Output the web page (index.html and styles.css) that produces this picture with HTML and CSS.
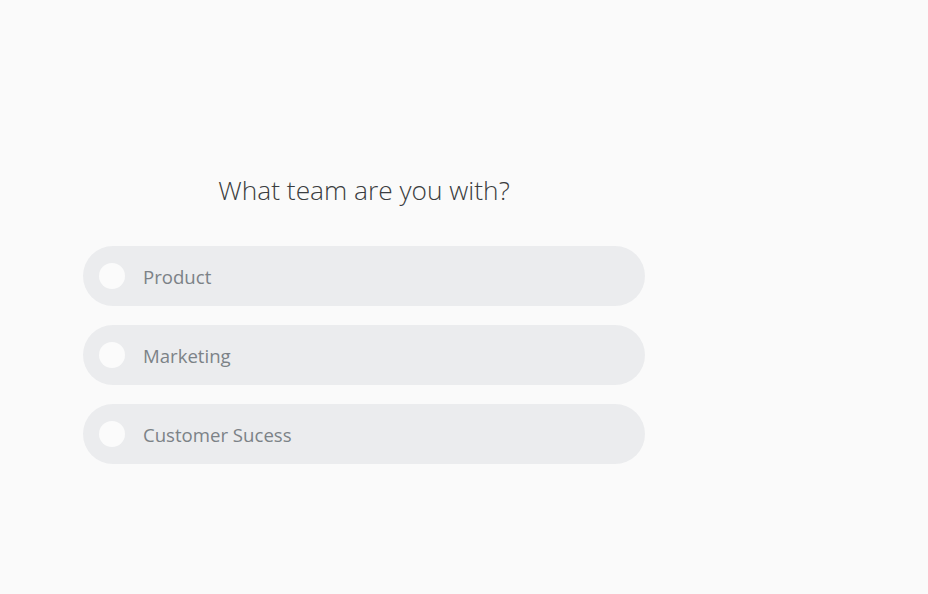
FILE: index.html
```html
<!DOCTYPE html>
<html>
<head>
<meta charset="utf-8">
<link rel="stylesheet" href="styles.css">
</head>
<body>
<div class="survey">
  <h1 class="question">What team are you with?</h1>
  <div class="options">
    <label class="option"><span class="radio"></span><span class="label">Product</span></label>
    <label class="option"><span class="radio"></span><span class="label">Marketing</span></label>
    <label class="option"><span class="radio"></span><span class="label">Customer Sucess</span></label>
  </div>
</div>
</body>
</html>
```
FILE: styles.css
```css
html, body {
  margin: 0;
  padding: 0;
  background: #fafafa;
  font-family: "Open Sans", "Noto Sans", sans-serif;
}
.survey {
  width: 562px;
  margin-left: 83px;
  padding-top: 172px;
}
.question {
  margin: 0 0 38px 0;
  text-align: center;
  font-weight: 300;
  font-size: 26.3px;
  line-height: 36px;
  color: #3a3d40;
}
.options {
  display: flex;
  flex-direction: column;
  gap: 19px;
}
.option {
  display: flex;
  align-items: center;
  height: 60px;
  border-radius: 30px;
  background: #ebecee;
  padding-left: 16px;
}
.radio {
  width: 26px;
  height: 26px;
  border-radius: 50%;
  background: #fbfbfb;
  flex: none;
}
.label {
  margin-left: 18px;
  font-size: 18.6px;
  color: #7c8287;
}
```
